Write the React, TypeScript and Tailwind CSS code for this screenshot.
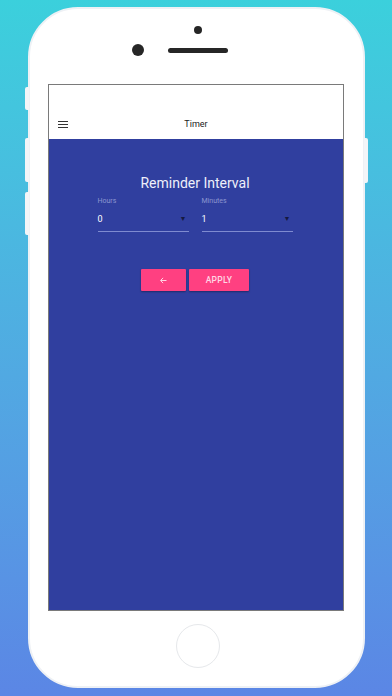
import React from "react";

const SideButton: React.FC<{ className: string }> = ({ className }) => (
    <div className={`absolute w-[4px] bg-[#f3f5f8] ${className}`} />
);

const Field: React.FC<{ label: string; value: string }> = ({ label, value }) => (
    <div className="w-[91px] flex flex-col">
        <span className="text-[7px] leading-[9px] text-[#8c96d0]">{label}</span>
        <div className="mt-[7px] flex items-center justify-between h-[12px] pr-[2px]">
            <span className="text-[9px] leading-[12px] text-white">{value}</span>
            <span className="text-[7px] leading-[12px] text-[#15193f]">▼</span>
        </div>
        <div className="mt-[6px] h-px bg-[#7f8bd0]" />
    </div>
);

export default function App() {
    return (
        <div
            className="w-[392px] h-[696px] overflow-hidden bg-gradient-to-b from-[#3bd0dc] to-[#5b86e5] pt-[7px] pl-[28px]"
            style={{ fontFamily: "Roboto, 'Liberation Sans', sans-serif" }}
        >
            <div className="relative w-[337px] h-[681px] rounded-[50px] bg-white border-2 border-[#eef1f5]">
                <SideButton className="-left-[5px] top-[78px] h-[23px] rounded-l-[2px]" />
                <SideButton className="-left-[5px] top-[129px] h-[44px] rounded-l-[2px]" />
                <SideButton className="-left-[5px] top-[183px] h-[43px] rounded-l-[2px]" />
                <SideButton className="-right-[5px] top-[129px] h-[45px] rounded-r-[2px]" />

                {/* earpiece, camera */}
                <div className="pt-[17px] pl-[164px]">
                    <div className="w-[8px] h-[8px] rounded-full bg-[#262626]" />
                </div>
                <div className="mt-[10px] pl-[102px] flex items-center gap-[24px]">
                    <div className="w-[12px] h-[12px] rounded-full bg-[#262626]" />
                    <div className="w-[60px] h-[5px] rounded-full bg-[#262626]" />
                </div>

                {/* screen */}
                <div className="mt-[28px] ml-[18px] w-[296px] h-[527px] border border-[#7a7a7a] flex flex-col">
                    <div className="h-[54px] bg-white flex items-end pb-[8px] px-[9px] relative">
                        <div className="flex flex-col gap-[2px] w-[10px] h-[14px] justify-center">
                            <div className="h-px bg-[#333]" />
                            <div className="h-px bg-[#333]" />
                            <div className="h-px bg-[#333]" />
                        </div>
                        <div className="flex-1 text-center text-[9px] leading-[14px] text-[#222] pr-[10px]">Timer</div>
                    </div>
                    <div className="flex-1 bg-[#303f9f] flex flex-col items-center pt-[34px] pr-[2px]">
                        <h1 className="text-[14px] leading-[20px] text-[#eef0fa]">Reminder Interval</h1>
                        <div className="mt-[4px] flex gap-[13px]">
                            <Field label="Hours" value="0" />
                            <Field label="Minutes" value="1" />
                        </div>
                        <div className="mt-[37px] flex gap-[3px]">
                            <button className="w-[45px] h-[22px] bg-[#ff4081] text-[#ffd6e4] flex items-center justify-center shadow-[0_1px_2px_rgba(0,0,0,0.35)] rounded-[1px]">
                                <svg width="9" height="9" viewBox="0 0 24 24" fill="none" stroke="currentColor" strokeWidth="2.6">
                                    <path d="M20 12H5M11 5l-7 7 7 7" />
                                </svg>
                            </button>
                            <button className="w-[60px] h-[22px] bg-[#ff4081] text-[#ffd6e4] text-[8.5px] font-medium tracking-[0.3px] shadow-[0_1px_2px_rgba(0,0,0,0.35)] rounded-[1px]">
                                APPLY
                            </button>
                        </div>
                    </div>
                </div>

                {/* home button */}
                <div className="mt-[13px] flex justify-center pl-[3px]">
                    <div className="w-[44px] h-[44px] rounded-full border-[1.5px] border-[#e6e8eb]" />
                </div>
            </div>
        </div>
    );
}
